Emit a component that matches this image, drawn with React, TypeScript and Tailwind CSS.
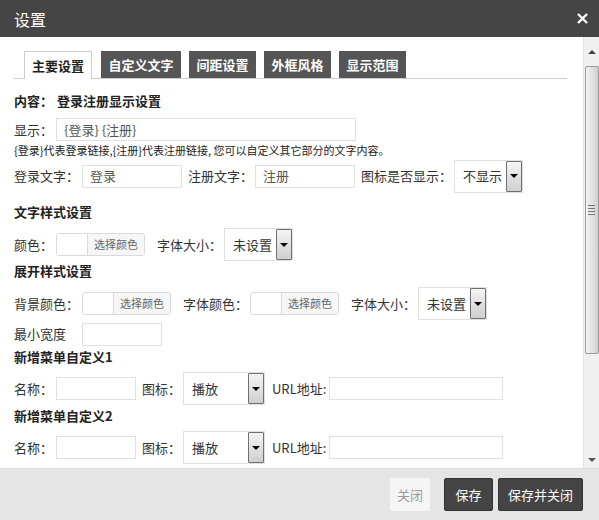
import React from 'react';

const font = { fontFamily: '"Noto Sans CJK SC", "Liberation Sans", sans-serif' };

function Label({ w, children }: { w: number; children: React.ReactNode }) {
  return (
    <span className="shrink-0 text-[13px] text-[#333]" style={{ width: w }}>
      {children}
    </span>
  );
}

function Input({ w, value }: { w: number; value?: string }) {
  return (
    <div
      className="flex h-[23px] shrink-0 items-center border border-[#e0e0e0] bg-white px-[7px] text-[13px] text-[#555]"
      style={{ width: w }}
    >
      {value}
    </div>
  );
}

function Select({ w, value }: { w: number; value: string }) {
  return (
    <div
      className="flex h-[33px] shrink-0 items-center justify-between border border-[#e0e0e0] bg-white pl-[8px] text-[13px] text-[#333]"
      style={{ width: w }}
    >
      <span>{value}</span>
      <div className="flex h-[31px] w-[16px] items-center justify-center rounded-[1px] border border-[#6f6f6f] bg-gradient-to-b from-[#f4f4f4] to-[#cfcfcf]">
        <div className="h-0 w-0 border-x-[4px] border-t-[4px] border-x-transparent border-t-black" />
      </div>
    </div>
  );
}

function ColorPicker() {
  return (
    <div className="flex h-[23px] w-[89px] shrink-0 overflow-hidden rounded-[3px] border border-[#d9d9d9] bg-white">
      <div className="w-[31px] border-r border-[#d9d9d9] bg-white" />
      <div className="flex flex-1 items-center justify-center bg-[#f6f6f6] text-[11px] text-[#666]">选择颜色</div>
    </div>
  );
}

function Heading({ children, mt }: { children: React.ReactNode; mt: string }) {
  return <div className={`flex h-[18px] shrink-0 items-center text-[13px] font-bold text-[#222] ${mt}`}>{children}</div>;
}

const tabs = ['主要设置', '自定义文字', '间距设置', '外框风格', '显示范围'];
const tabW = [68, 80, 67, 67, 67];

export default function App() {
  return (
    <div className="flex h-[520px] w-[599px] flex-col overflow-hidden bg-white" style={font}>
      {/* Header */}
      <div className="flex h-[37px] shrink-0 items-center justify-between bg-[#454545] pl-[14px] pr-[11px]">
        <span className="text-[16px] text-white">设置</span>
        <svg width="11" height="11" viewBox="0 0 11 11">
          <path d="M1 1L10 10M10 1L1 10" stroke="white" strokeWidth="2.4" />
        </svg>
      </div>

      {/* Body */}
      <div className="flex h-[431px] shrink-0">
        <div className="flex w-[583px] flex-col overflow-hidden pl-[14px] pr-[16px] pt-[14px]">
          {/* Tabs */}
          <div className="flex h-[28px] shrink-0 items-end border-b border-[#ccc] pl-[10px]">
            {tabs.map((t, i) => (
              <div
                key={t}
                className={
                  i === 0
                    ? 'relative -mb-px flex h-[28px] items-center justify-center border border-b-0 border-[#ccc] bg-white text-[13px] font-bold text-[#222]'
                    : 'ml-[8px] flex h-[27px] items-center justify-center bg-[#555] text-[13px] font-bold text-white'
                }
                style={{ width: tabW[i], marginLeft: i === 1 ? 9 : undefined }}
              >
                {t}
              </div>
            ))}
          </div>

          <div className="mt-[13px] flex h-[18px] shrink-0 items-center text-[13px] font-bold text-[#222]">
            <span className="w-[43px]">内容：</span>
            <span>登录注册显示设置</span>
          </div>

          <div className="mt-[8px] flex h-[23px] shrink-0 items-center">
            <Label w={42}>显示：</Label>
            <Input w={300} value="{登录} {注册}" />
          </div>

          <div className="mt-[2px] flex h-[14px] shrink-0 items-center text-[11px] text-[#222]">
            {'{登录}代表登录链接,{注册}代表注册链接, 您可以自定义其它部分的文字内容。'}
          </div>

          <div className="mt-[3px] flex h-[32px] shrink-0 items-center">
            <Label w={68}>登录文字：</Label>
            <Input w={100} value="登录" />
            <span className="w-[6px]" />
            <Label w={67}>注册文字：</Label>
            <Input w={100} value="注册" />
            <span className="w-[6px]" />
            <Label w={93}>图标是否显示：</Label>
            <Select w={69} value="不显示" />
          </div>

          <Heading mt="mt-[11px]">文字样式设置</Heading>
          <div className="mt-[7px] flex h-[33px] shrink-0 items-center">
            <Label w={42}>颜色：</Label>
            <ColorPicker />
            <span className="w-[12px]" />
            <Label w={67}>字体大小：</Label>
            <Select w={69} value="未设置" />
          </div>

          <Heading mt="mt-[1px]">展开样式设置</Heading>
          <div className="mt-[7px] flex h-[33px] shrink-0 items-center">
            <Label w={68}>背景颜色：</Label>
            <ColorPicker />
            <span className="w-[12px]" />
            <Label w={67}>字体颜色：</Label>
            <ColorPicker />
            <span className="w-[12px]" />
            <Label w={67}>字体大小：</Label>
            <Select w={69} value="未设置" />
          </div>

          <div className="mt-[2px] flex h-[24px] shrink-0 items-center">
            <Label w={68}>最小宽度</Label>
            <Input w={80} />
          </div>

          {[1, 2].map((n) => (
            <React.Fragment key={n}>
              <Heading mt="mt-[2px]">新增菜单自定义{n}</Heading>
              <div className="mt-[6px] flex h-[33px] shrink-0 items-center">
                <Label w={42}>名称：</Label>
                <Input w={80} />
                <span className="w-[6px]" />
                <Label w={41}>图标：</Label>
                <Select w={82} value="播放" />
                <span className="w-[7px]" />
                <Label w={57}>URL地址:</Label>
                <Input w={174} />
              </div>
            </React.Fragment>
          ))}
        </div>

        {/* Scrollbar */}
        <div className="flex w-[16px] flex-col border-l border-[#e2e2e2] bg-[#f0f0f0]">
          <div className="flex h-[29px] items-center justify-center">
            <div className="h-0 w-0 border-x-[4px] border-b-[4px] border-x-transparent border-b-[#444]" />
          </div>
          <div className="mx-auto flex h-[288px] w-[14px] items-center justify-center rounded-[2px] border border-[#9a9a9a] bg-gradient-to-r from-[#f3f3f3] via-[#e2e2e2] to-[#cfcfcf]">
            <div className="flex flex-col gap-[2px]">
              <div className="h-px w-[7px] bg-[#777]" />
              <div className="h-px w-[7px] bg-[#777]" />
              <div className="h-px w-[7px] bg-[#777]" />
              <div className="h-px w-[7px] bg-[#777]" />
            </div>
          </div>
          <div className="flex-1" />
          <div className="flex h-[16px] items-center justify-center">
            <div className="h-0 w-0 border-x-[4px] border-t-[4px] border-x-transparent border-t-[#555]" />
          </div>
        </div>
      </div>

      {/* Footer */}
      <div className="flex flex-1 items-center justify-end border-t border-[#dcdcdc] bg-[#e5e5e5] pr-[16px]">
        <button className="h-[33px] w-[40px] rounded-[2px] bg-[#f5f5f5] text-[13px] text-[#999]">关闭</button>
        <button className="ml-[14px] h-[33px] w-[49px] rounded-[2px] border border-[#333] bg-[#444] text-[13px] text-white">保存</button>
        <button className="ml-[5px] h-[33px] w-[85px] rounded-[2px] border border-[#333] bg-[#444] text-[13px] text-white">保存并关闭</button>
      </div>
    </div>
  );
}
